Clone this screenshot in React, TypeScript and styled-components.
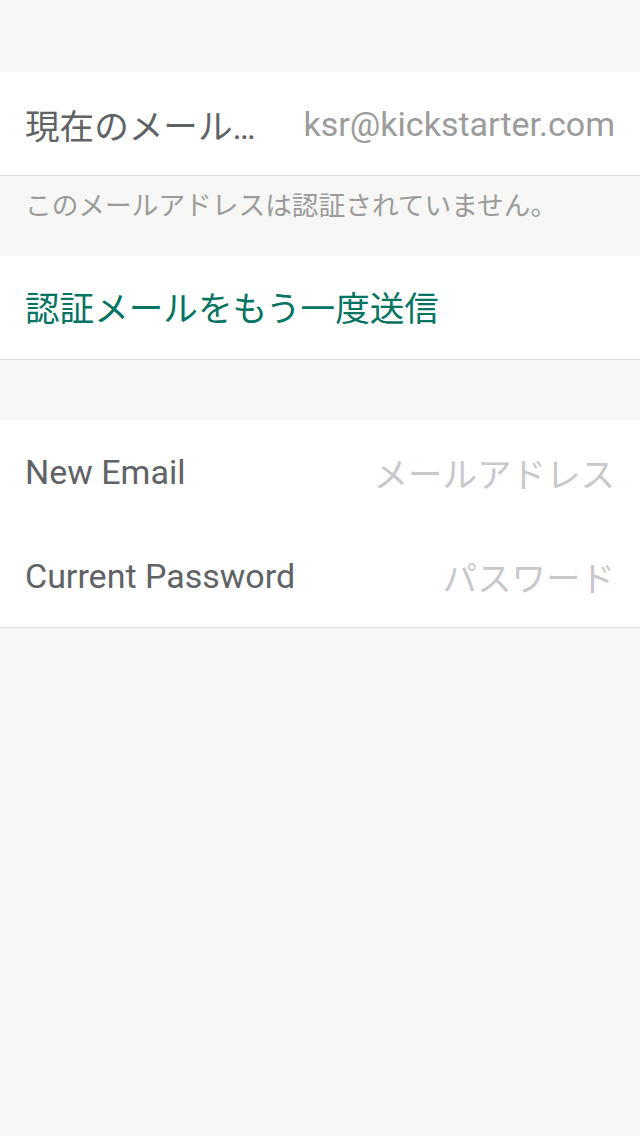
import React from "react";
import styled, { createGlobalStyle } from "styled-components";

const GlobalStyle = createGlobalStyle`
  html, body {
    margin: 0;
    padding: 0;
    background: #f7f7f5;
  }
  body {
    font-family: Roboto, "Noto Sans CJK JP", sans-serif;
    -webkit-font-smoothing: antialiased;
  }
`;

const Page = styled.div`
  min-height: 1136px;
  background: #f7f7f5;
  padding-top: 72px;
  box-sizing: border-box;
`;

const Section = styled.div`
  background: #ffffff;
  border-bottom: 1px solid #dcdcdc;
`;

const Row = styled.div<{ $h?: number }>`
  height: ${(p) => p.$h ?? 104}px;
  display: flex;
  align-items: center;
  padding: 0 25px;
  box-sizing: border-box;
`;

const Label = styled.div<{ $ja?: boolean }>`
  flex: 1 1 auto;
  min-width: 0;
  font-size: ${(p) => (p.$ja ? 34.6 : 34)}px;
  color: #5f6366;
  white-space: nowrap;
  overflow: hidden;
  text-overflow: ellipsis;
`;

const Value = styled.div<{ $placeholder?: boolean; $ja?: boolean }>`
  flex: 0 0 auto;
  margin-left: 36px;
  font-size: ${(p) => (p.$ja ? 34.5 : 34)}px;
  color: ${(p) => (p.$placeholder ? "#c8c8cc" : "#9b9b9b")};
  white-space: nowrap;
`;

const Note = styled.div`
  height: 80px;
  padding: 8px 25px 0;
  box-sizing: border-box;
  font-size: 26.7px;
  color: #9b9b9b;
`;

const ActionRow = styled(Row)`
  font-size: 34.6px;
  color: #037362;
  padding-bottom: 4px;
`;

const Spacer = styled.div<{ $h: number }>`
  height: ${(p) => p.$h}px;
`;

export default function App() {
  return (
    <>
      <GlobalStyle />
      <Page>
        <Section>
          <Row $h={103}>
            <Label $ja>現在のメールアドレス</Label>
            <Value>ksr@kickstarter.com</Value>
          </Row>
        </Section>
        <Note>このメールアドレスは認証されていません。</Note>
        <Section>
          <ActionRow $h={103}>認証メールをもう一度送信</ActionRow>
        </Section>
        <Spacer $h={60} />
        <Section>
          <Row>
            <Label>New Email</Label>
            <Value $placeholder $ja>
              メールアドレス
            </Value>
          </Row>
          <Row $h={103}>
            <Label>Current Password</Label>
            <Value $placeholder $ja>
              パスワード
            </Value>
          </Row>
        </Section>
      </Page>
    </>
  );
}
